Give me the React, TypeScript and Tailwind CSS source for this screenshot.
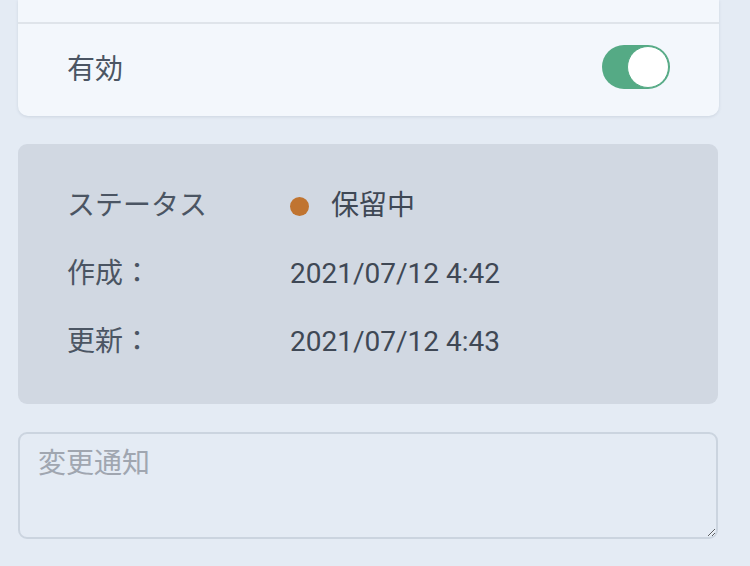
import { useState } from "react";

const font = { fontFamily: '"Roboto", "Noto Sans CJK JP", sans-serif' };

function Toggle() {
  const [on, setOn] = useState(true);
  return (
    <button
      type="button"
      onClick={() => setOn(!on)}
      className={`relative mb-[6px] h-[44px] w-[68px] rounded-full ${on ? "bg-[#55aa85]" : "bg-gray-300"}`}
    >
      <span
        className={`absolute top-[1px] h-[42px] w-[42px] rounded-full border border-[#55aa85] bg-white ${on ? "right-[1px]" : "left-[1px]"}`}
      />
    </button>
  );
}

export default function App() {
  const rows = [
    { label: "作成：", value: "2021/07/12 4:42" },
    { label: "更新：", value: "2021/07/12 4:43" },
  ];
  return (
    <div
      className="min-h-[566px] bg-[#e4ebf4] pl-[18px] pr-[31px] pb-[26px] text-[28px]"
      style={font}
    >
      <div className="rounded-b-[10px] bg-[#f3f7fc] shadow-[0_1px_3px_rgba(100,116,139,0.18)]">
        <div className="h-[24px] border-b-2 border-[#dfe4ea]" />
        <div className="flex h-[92px] items-center justify-between pl-[49px] pr-[49px]">
          <span className="text-[#4b5563]">有効</span>
          <Toggle />
        </div>
      </div>

      <div className="mt-[28px] mr-[1px] rounded-[9px] bg-[#d1d8e2] px-[49px] py-[28px]">
        <div className="flex h-[68px] items-center">
          <span className="w-[223px] text-[#4b5563]">ステータス</span>
          <span className="flex items-center text-[#3f4855]">
            <span className="mr-[22px] h-[19px] w-[19px] rounded-full bg-[#c07430]" />
            保留中
          </span>
        </div>
        {rows.map((r) => (
          <div key={r.label} className="flex h-[68px] items-center">
            <span className="w-[223px] text-[#4b5563]">{r.label}</span>
            <span className="text-[28px] text-[#3f4855]">{r.value}</span>
          </div>
        ))}
      </div>

      <textarea
        placeholder="変更通知"
        className="mt-[28px] block h-[107px] w-[700px] rounded-[9px] border-2 border-[#cbd4df] bg-[#e4ebf4] px-[18px] py-[9px] text-[28px] leading-[1.5] text-[#3f4855] placeholder:text-[#a0a6b0] focus:outline-none"
        style={font}
      />
    </div>
  );
}
